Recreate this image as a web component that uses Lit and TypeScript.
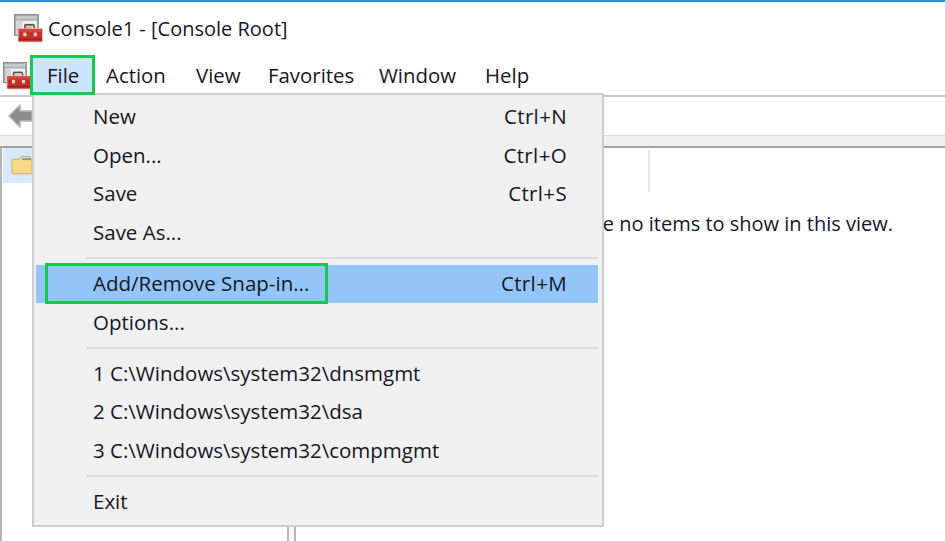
import { LitElement, html, css, svg } from "lit";
import { customElement } from "lit/decorators.js";

const consoleIcon = (size: number) => html`<svg class="mmc" width=${size} height=${size} viewBox="0 0 28 28">
  ${svg`
  <rect x="0.5" y="0.5" width="23" height="20" fill="#a9adb3" stroke="#8b8f96"/>
  <rect x="2" y="2" width="20" height="3" fill="#c6c9cd"/>
  <rect x="2" y="6.5" width="20" height="13" fill="#eef0f2"/>
  <rect x="2" y="6.5" width="6" height="13" fill="#d2d5d9"/>
  <path d="M10 10h9M10 13h7" stroke="#a4a8ae" stroke-width="1.2"/>
  <path d="M10.5 15v-3.2q0-1.3 1.3-1.3h6.4q1.3 0 1.3 1.3V15" fill="none" stroke="#6b4a3c" stroke-width="1.6"/>
  <rect x="4" y="14" width="23.5" height="13" rx="1" fill="#c4302b" stroke="#e8c9b8" stroke-width="0.8"/>
  <rect x="4.5" y="14.5" width="22.5" height="3" fill="#d9423a"/>
  <rect x="9" y="18" width="3" height="3.4" fill="#e9d7b8"/>
  <rect x="19" y="18" width="3" height="3.4" fill="#e9d7b8"/>
  <path d="M4.5 24.5h22.5" stroke="#9c211d" stroke-width="1.4"/>`}
</svg>`;

const MENUS: [string, number][] = [
  ["Action", 90],
  ["View", 72],
  ["Favorites", 111],
  ["Window", 106],
  ["Help", 72],
];

@customElement("app-root")
export class AppRoot extends LitElement {
  static styles = css`
    :host {
      display: block;
      width: 945px;
      height: 541px;
      overflow: hidden;
      background: #fff;
      color: #16161f;
      font-family: "Open Sans", "Noto Sans", sans-serif;
      font-size: 20px;
    }
    .root {
      position: relative;
      height: 100%;
      display: flex;
      flex-direction: column;
      border-top: 2px solid #2a8fdc;
      box-sizing: border-box;
    }
    svg { display: block; flex: none; }
    .title {
      height: 53px;
      display: flex;
      align-items: center;
      gap: 5px;
      padding: 0 0 0 14px;
      box-sizing: border-box;
    }
    .menubar {
      height: 40px;
      display: flex;
      align-items: center;
      padding-left: 3px;
      font-size: 20.4px;
    }
    .menubar .mmc { margin-right: -1px; margin-top: 2px; }
    .mi {
      height: 100%;
      box-sizing: border-box;
      display: flex;
      align-items: center;
      padding-left: 14px;
    }
    .mi.file {
      position: relative;
      z-index: 1;
      width: 65px;
      background: #cce4fb;
      border: 3px solid #10cc4a;
      margin-right: -3px;
    }
    .toolbar {
      height: 38px;
      border-top: 2px solid #c9c9c9;
      display: flex;
      align-items: center;
      padding-left: 8px;
    }
    .band {
      height: 10px;
      background: #f0f0f0;
      border-top: 1px solid #dcdcdc;
      border-bottom: 2px solid #a2a2a2;
    }
    .panes {
      flex: 1;
      display: flex;
      min-height: 0;
    }
    .left {
      width: 287px;
      box-sizing: border-box;
      border-left: 2px solid #b4b4b8;
      padding: 0 0 0 1px;
    }
    .treeitem {
      width: 60px;
      height: 35px;
      background: #d4e9fc;
      display: flex;
      align-items: center;
      padding-left: 8px;
    }
    .splitter {
      width: 9px;
      box-sizing: border-box;
      background: #f8f8f8;
      border-left: 2px solid #b6b6b6;
      border-right: 2px solid #b6b6b6;
    }
    .right { flex: 1; min-width: 0; }
    .colhead {
      height: 44px;
      display: flex;
      padding: 2px 0 0 352px;
      box-sizing: border-box;
    }
    .colhead i {
      width: 2px;
      height: 42px;
      background: #e6e6e6;
    }
    .empty {
      margin-top: 18px;
      text-align: right;
      padding-right: 52px;
      line-height: 27px;
    }
    .menu {
      position: absolute;
      left: 32px;
      top: 91px;
      width: 572px;
      height: 434px;
      box-sizing: border-box;
      background: #f0f0f0;
      border: 2px solid #cdcdcd;
      padding: 2.5px 4px 0 2px;
      font-size: 20.5px;
    }
    .row {
      position: relative;
      height: 38.7px;
      box-sizing: border-box;
      display: flex;
      align-items: center;
      justify-content: space-between;
      padding: 0 31px 2px 57px;
    }
    .key { letter-spacing: 0.35px; }
    .row.hl { background: #93c5f9; }
    .hlbox {
      position: absolute;
      left: 9px;
      top: -2px;
      width: 283px;
      height: 41px;
      box-sizing: border-box;
      border: 3px solid #10cc4a;
    }
    .sep {
      height: 12.3px;
      display: flex;
      align-items: center;
      padding-left: 50px;
    }
    .sep::after {
      content: "";
      display: block;
      width: 100%;
      height: 2px;
      background: #dcdcdc;
    }
  `;

  private row(label: string, key = "") {
    return html`<div class="row"><span>${label}</span><span class="key">${key}</span></div>`;
  }

  render() {
    return html`<div class="root">
      <div class="title">${consoleIcon(29)}<span>Console1 - [Console Root]</span></div>
      <div class="menubar">
        ${consoleIcon(28)}
        <div class="mi file">File</div>
        ${MENUS.map(([m, w]) => html`<div class="mi" style="width:${w}px">${m}</div>`)}
      </div>
      <div class="toolbar">
        <svg width="24" height="26" viewBox="0 0 24 26">
          <path d="M1 13 L12 2 V8 H24 V18 H12 V24 Z" fill="#8d8d8d" stroke="#b5b5b5" stroke-width="1.5" stroke-linejoin="round"/>
        </svg>
      </div>
      <div class="band"></div>
      <div class="panes">
        <div class="left">
          <div class="treeitem">
            <svg width="22" height="23" viewBox="0 0 24 24">
              <path d="M1 6q0-1 1-1h7l2-3h9q1 0 1 1v3q2 0 2 1v13q0 1-1 1H2q-1 0-1-1z" fill="#f8d88a" stroke="#cfa95c"/>
              <path d="M12 5h10" stroke="#5aa5e0" stroke-width="2"/>
            </svg>
          </div>
        </div>
        <div class="splitter"></div>
        <div class="right">
          <div class="colhead"><i></i></div>
          <div class="empty">There are no items to show in this view.</div>
        </div>
      </div>
      <div class="menu">
        ${this.row("New", "Ctrl+N")}
        ${this.row("Open...", "Ctrl+O")}
        ${this.row("Save", "Ctrl+S")}
        ${this.row("Save As...")}
        <div class="sep"></div>
        <div class="row hl"><span>Add/Remove Snap-in...</span><span class="key">Ctrl+M</span><div class="hlbox"></div></div>
        ${this.row("Options...")}
        <div class="sep"></div>
        ${this.row("1 C:\\Windows\\system32\\dnsmgmt")}
        ${this.row("2 C:\\Windows\\system32\\dsa")}
        ${this.row("3 C:\\Windows\\system32\\compmgmt")}
        <div class="sep"></div>
        ${this.row("Exit")}
      </div>
    </div>`;
  }
}
